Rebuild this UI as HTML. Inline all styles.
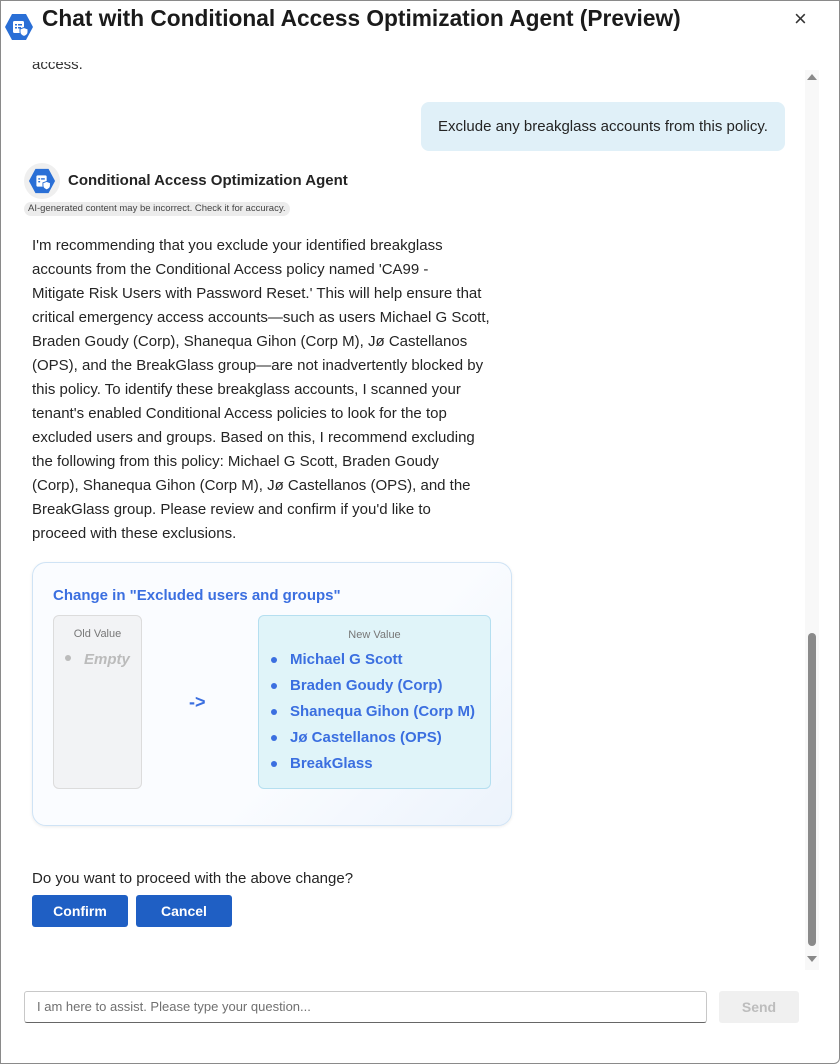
<!DOCTYPE html>
<html><head><meta charset="utf-8"><style>
*{box-sizing:border-box}
body{margin:0;width:840px;height:1064px;overflow:hidden;background:#fff;font-family:"Liberation Sans",sans-serif;color:#242424}
.frame{position:absolute;left:0;top:0;width:840px;height:1064px;border:1px solid #8a8a8a;border-radius:0 0 6px 0}
.abs{position:absolute}
p.l{margin:0;white-space:nowrap;font-size:15px;line-height:24px}
.btn{position:absolute;top:895px;width:96px;height:32px;background:#1f5fc4;color:#fff;font-weight:bold;font-size:14px;text-align:center;line-height:32px;border-radius:3px}
ul{margin:0;padding:0;list-style:none}
ul li{height:26px;line-height:26px;position:relative;padding-left:20px}
ul li:before{content:"";position:absolute;left:1px;top:10px;width:6px;height:6px;border-radius:50%;background:#3b6fe0}
</style></head><body>
<div class="frame"></div>
<svg class="abs" style="left:4px;top:12px" width="30" height="30" viewBox="0 0 30 30"><polygon points="8,2 22,2 29,15 22,28 8,28 1,15" fill="#2a6fd6"/><rect x="9" y="9" width="11" height="12" rx="1.5" fill="#fff"/><rect x="11" y="12" width="2" height="1.5" fill="#2a6fd6"/><rect x="14" y="12" width="4" height="1.5" fill="#2a6fd6"/><rect x="11" y="15" width="2" height="1.5" fill="#2a6fd6"/><rect x="14" y="15" width="3" height="1.5" fill="#2a6fd6"/><path d="M16 17 l4-1.5 4 1.5 v3 c0 2.5-2 3.5-4 4.5 c-2-1-4-2-4-4.5z" fill="#fff" stroke="#2a6fd6"/></svg>
<div class="abs" style="left:42px;top:5px;font-size:22.7px;font-weight:bold;color:#1b1b1b;white-space:nowrap">Chat with Conditional Access Optimization Agent (Preview)</div>
<div class="abs" style="left:794px;top:6px;font-size:22px;color:#333">×</div>
<div class="abs" style="left:32px;top:56px;font-size:15px;color:#333;clip-path:inset(6px 0 0 0)">access.</div>
<div class="abs" style="left:421px;top:102px;width:364px;height:49px;background:#e0f0f8;border-radius:8px;font-size:15px;line-height:49px;text-align:center;color:#242424">Exclude any breakglass accounts from this policy.</div>
<div class="abs" style="left:24px;top:163px;width:36px;height:36px;border-radius:50%;background:#efefef"></div>
<svg class="abs" style="left:28px;top:167px" width="28" height="28" viewBox="0 0 30 30"><polygon points="8,2 22,2 29,15 22,28 8,28 1,15" fill="#2a6fd6"/><rect x="9" y="9" width="11" height="12" rx="1.5" fill="#fff"/><rect x="11" y="12" width="2" height="1.5" fill="#2a6fd6"/><rect x="14" y="12" width="4" height="1.5" fill="#2a6fd6"/><rect x="11" y="15" width="2" height="1.5" fill="#2a6fd6"/><path d="M16 17 l4-1.5 4 1.5 v3 c0 2.5-2 3.5-4 4.5 c-2-1-4-2-4-4.5z" fill="#fff" stroke="#2a6fd6"/></svg>
<div class="abs" style="left:68px;top:172px;font-size:15px;font-weight:bold;color:#242424">Conditional Access Optimization Agent</div>
<div class="abs" style="left:24px;top:202px;height:14px;padding:0 4px;background:#ececec;border-radius:7px;font-size:9.5px;line-height:14px;color:#444">AI-generated content may be incorrect. Check it for accuracy.</div>
<div class="abs" style="left:32px;top:234px">
<p class="l">I'm recommending that you exclude your identified breakglass</p>
<p class="l">accounts from the Conditional Access policy named 'CA99 -</p>
<p class="l">Mitigate Risk Users with Password Reset.' This will help ensure that</p>
<p class="l">critical emergency access accounts—such as users Michael G Scott,</p>
<p class="l">Braden Goudy (Corp), Shanequa Gihon (Corp M), Jø Castellanos</p>
<p class="l">(OPS), and the BreakGlass group—are not inadvertently blocked by</p>
<p class="l">this policy. To identify these breakglass accounts, I scanned your</p>
<p class="l">tenant's enabled Conditional Access policies to look for the top</p>
<p class="l">excluded users and groups. Based on this, I recommend excluding</p>
<p class="l">the following from this policy: Michael G Scott, Braden Goudy</p>
<p class="l">(Corp), Shanequa Gihon (Corp M), Jø Castellanos (OPS), and the</p>
<p class="l">BreakGlass group. Please review and confirm if you'd like to</p>
<p class="l">proceed with these exclusions.</p>
</div>
<div class="abs" style="left:32px;top:562px;width:480px;height:264px;border:1px solid #cfe3f5;border-radius:14px;background:linear-gradient(135deg,#fafcff 60%,#ecf3fc);box-shadow:0 1px 3px rgba(0,0,0,.08)"></div>
<div class="abs" style="left:53px;top:587px;font-size:15px;font-weight:bold;color:#3b6fe0">Change in "Excluded users and groups"</div>
<div class="abs" style="left:53px;top:615px;width:89px;height:174px;background:#f2f3f5;border:1px solid #dcdcdc;border-radius:6px"></div>
<div class="abs" style="left:53px;top:628px;width:89px;text-align:center;font-size:11px;color:#777">Old Value</div>
<div class="abs" style="left:65px;top:651px;font-size:15px;font-weight:bold;font-style:italic;color:#bbb"><span style="display:inline-block;width:6px;height:6px;border-radius:50%;background:#bbb;vertical-align:3px;margin-right:13px"></span>Empty</div>
<div class="abs" style="left:189px;top:692px;font-size:18px;font-weight:bold;color:#3b6fe0">-&gt;</div>
<div class="abs" style="left:258px;top:615px;width:233px;height:174px;background:#e0f4f9;border:1px solid #b5dff0;border-radius:6px"></div>
<div class="abs" style="left:258px;top:629px;width:233px;text-align:center;font-size:11px;color:#777">New Value</div>
<ul class="abs" style="left:270px;top:647px;font-size:15px;font-weight:bold;color:#3b6fe0">
<li>Michael G Scott</li>
<li>Braden Goudy (Corp)</li>
<li>Shanequa Gihon (Corp M)</li>
<li>Jø Castellanos (OPS)</li>
<li>BreakGlass</li>
</ul>
<div class="abs" style="left:32px;top:870px;font-size:15px">Do you want to proceed with the above change?</div>
<div class="btn" style="left:32px">Confirm</div>
<div class="btn" style="left:136px">Cancel</div>
<div class="abs" style="left:805px;top:70px;width:14px;height:900px;background:#f8f8f8"></div>
<div class="abs" style="left:807px;top:74px;width:0;height:0;border-left:5px solid transparent;border-right:5px solid transparent;border-bottom:6px solid #888"></div>
<div class="abs" style="left:808px;top:633px;width:8px;height:313px;background:#8a8a8a;border-radius:4px"></div>
<div class="abs" style="left:807px;top:956px;width:0;height:0;border-left:5px solid transparent;border-right:5px solid transparent;border-top:6px solid #888"></div>
<div class="abs" style="left:24px;top:991px;width:683px;height:32px;border:1px solid #c8c8c8;border-bottom:1px solid #666;border-radius:3px;font-size:13px;line-height:30px;padding-left:12px;color:#707070">I am here to assist. Please type your question...</div>
<div class="abs" style="left:719px;top:991px;width:80px;height:32px;background:#f0f0f0;border-radius:3px;font-size:14px;font-weight:bold;color:#bdbdbd;text-align:center;line-height:32px">Send</div>
</body></html>
